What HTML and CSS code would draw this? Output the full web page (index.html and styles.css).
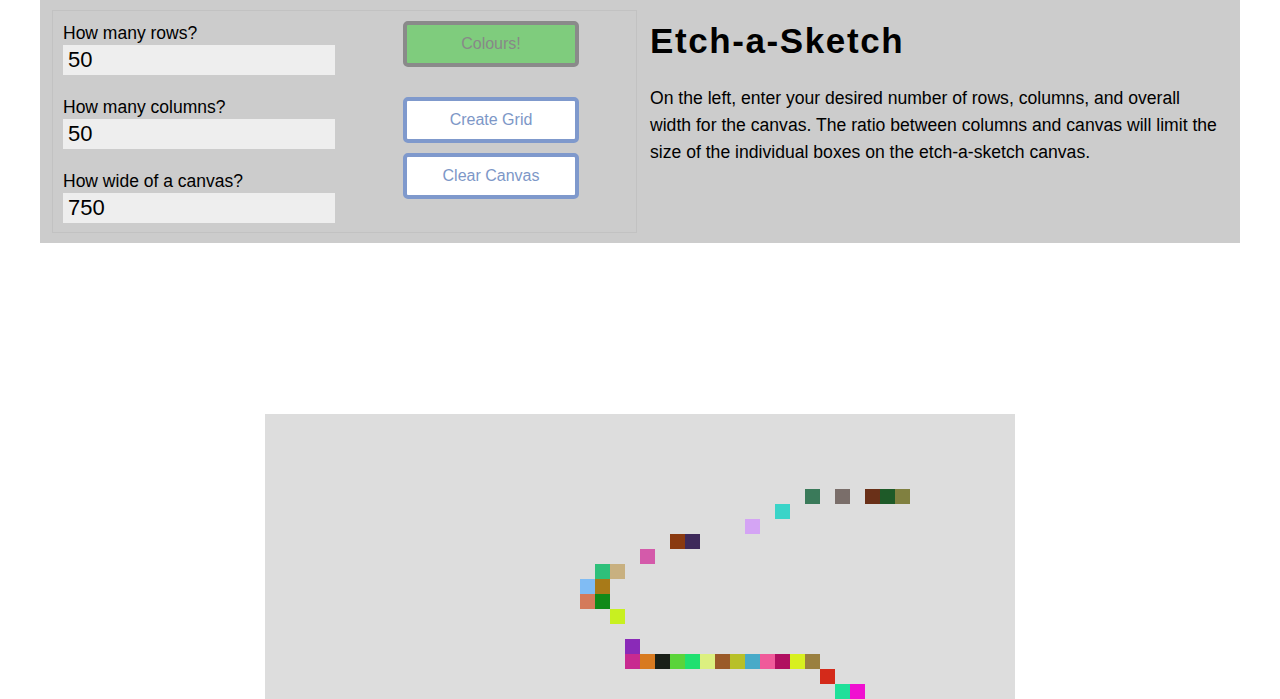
FILE: index.html
```html
<!DOCTYPE html>
<html lang="en">
<head>
<meta charset="utf-8">
<title>Etch-a-Sketch</title>
<link rel="stylesheet" href="styles.css">
</head>
<body>
<header class="header">
  <form class="panel">
    <div class="fields">
      <div class="field">
        <label class="field-label" for="rows">How many rows?</label>
        <input class="field-input" id="rows" type="text" value="50">
      </div>
      <div class="field">
        <label class="field-label" for="cols">How many columns?</label>
        <input class="field-input" id="cols" type="text" value="50">
      </div>
      <div class="field">
        <label class="field-label" for="width">How wide of a canvas?</label>
        <input class="field-input" id="width" type="text" value="750">
      </div>
    </div>
    <div class="buttons">
      <button type="button" class="btn btn-colours">Colours!</button>
      <button type="button" class="btn btn-blue">Create Grid</button>
      <button type="button" class="btn btn-blue">Clear Canvas</button>
    </div>
  </form>
  <div class="intro">
    <h1 class="title">Etch-a-Sketch</h1>
    <p class="desc">On the left, enter your desired number of rows, columns, and overall width for the canvas. The ratio between columns and canvas will limit the size of the individual boxes on the etch-a-sketch canvas.</p>
  </div>
</header>

<main class="canvas">
  <div class="cell" style="grid-area:6/37;background:#3a7a5a"></div>
  <div class="cell" style="grid-area:6/39;background:#7a6e6a"></div>
  <div class="cell" style="grid-area:6/41;background:#6a3018"></div>
  <div class="cell" style="grid-area:6/42;background:#1e5a28"></div>
  <div class="cell" style="grid-area:6/43;background:#808040"></div>
  <div class="cell" style="grid-area:7/35;background:#3ad4c8"></div>
  <div class="cell" style="grid-area:8/33;background:#d4a4f4"></div>
  <div class="cell" style="grid-area:9/28;background:#8a3a10"></div>
  <div class="cell" style="grid-area:9/29;background:#3e2a5a"></div>
  <div class="cell" style="grid-area:10/26;background:#d45aaa"></div>
  <div class="cell" style="grid-area:11/23;background:#2ec07a"></div>
  <div class="cell" style="grid-area:11/24;background:#c8b080"></div>
  <div class="cell" style="grid-area:12/22;background:#80bcf4"></div>
  <div class="cell" style="grid-area:12/23;background:#a87a18"></div>
  <div class="cell" style="grid-area:13/22;background:#d47a5a"></div>
  <div class="cell" style="grid-area:13/23;background:#108a18"></div>
  <div class="cell" style="grid-area:14/24;background:#c8f020"></div>
  <div class="cell" style="grid-area:16/25;background:#8a2ab8"></div>
  <div class="cell" style="grid-area:17/25;background:#c82a90"></div>
  <div class="cell" style="grid-area:17/26;background:#d87a20"></div>
  <div class="cell" style="grid-area:17/27;background:#1a2018"></div>
  <div class="cell" style="grid-area:17/28;background:#5ad43a"></div>
  <div class="cell" style="grid-area:17/29;background:#20e070"></div>
  <div class="cell" style="grid-area:17/30;background:#dcf080"></div>
  <div class="cell" style="grid-area:17/31;background:#9a5a28"></div>
  <div class="cell" style="grid-area:17/32;background:#b8c028"></div>
  <div class="cell" style="grid-area:17/33;background:#48aac8"></div>
  <div class="cell" style="grid-area:17/34;background:#f05a9a"></div>
  <div class="cell" style="grid-area:17/35;background:#b01060"></div>
  <div class="cell" style="grid-area:17/36;background:#d8f020"></div>
  <div class="cell" style="grid-area:17/37;background:#9a8040"></div>
  <div class="cell" style="grid-area:18/38;background:#d42a1a"></div>
  <div class="cell" style="grid-area:19/39;background:#20e09a"></div>
  <div class="cell" style="grid-area:19/40;background:#f010d0"></div>
</main>
</body>
</html>
```

FILE: styles.css
```css
* {
  box-sizing: border-box;
}

body {
  margin: 0;
  background: #fff;
  font-family: "Liberation Sans", Arial, Helvetica, sans-serif;
  color: #000;
}

.header {
  width: 1200px;
  height: 243px;
  margin: 0 auto;
  padding: 10px 12px;
  background: #cccccc;
  display: flex;
  gap: 13px;
}

.panel {
  width: 585px;
  height: 223px;
  margin: 0;
  border: 1px solid #c2c2c2;
  padding: 10px 10px;
  display: flex;
  gap: 68px;
}

.fields {
  width: 272px;
  padding-top: 2px;
  display: flex;
  flex-direction: column;
  gap: 22px;
}

.field {
  display: flex;
  flex-direction: column;
}

.field-label {
  font-size: 17.5px;
  line-height: 20px;
  height: 20px;
  margin-bottom: 2px;
}

.field-input {
  width: 272px;
  height: 30px;
  border: none;
  outline: none;
  background: #eeeeee;
  padding: 0 5px;
  font-family: "Liberation Sans", Arial, Helvetica, sans-serif;
  font-size: 22px;
  color: #000;
}

.buttons {
  display: flex;
  flex-direction: column;
}

.btn {
  width: 176px;
  height: 46px;
  border: 4px solid #7f99cc;
  border-radius: 5px;
  background: #fff;
  color: #7d97c7;
  font-family: "Liberation Sans", Arial, Helvetica, sans-serif;
  font-size: 16px;
  padding: 0;
  margin-bottom: 10px;
}

.btn-colours {
  background: #7fcc7d;
  border-color: #8a8a8a;
  color: #888888;
  margin-bottom: 30px;
}

.intro {
  width: 570px;
}

.title {
  margin: 11px 0 0;
  font-size: 35px;
  line-height: 40px;
  font-weight: bold;
  letter-spacing: 1.6px;
}

.desc {
  margin: 24px 0 0;
  font-size: 17.6px;
  line-height: 27px;
}

.canvas {
  width: 750px;
  height: 750px;
  margin: 171px auto 0;
  background: #dddddd;
  display: grid;
  grid-template-columns: repeat(50, 15px);
  grid-template-rows: repeat(50, 15px);
}

.cell {
  width: 15px;
  height: 15px;
}
```
